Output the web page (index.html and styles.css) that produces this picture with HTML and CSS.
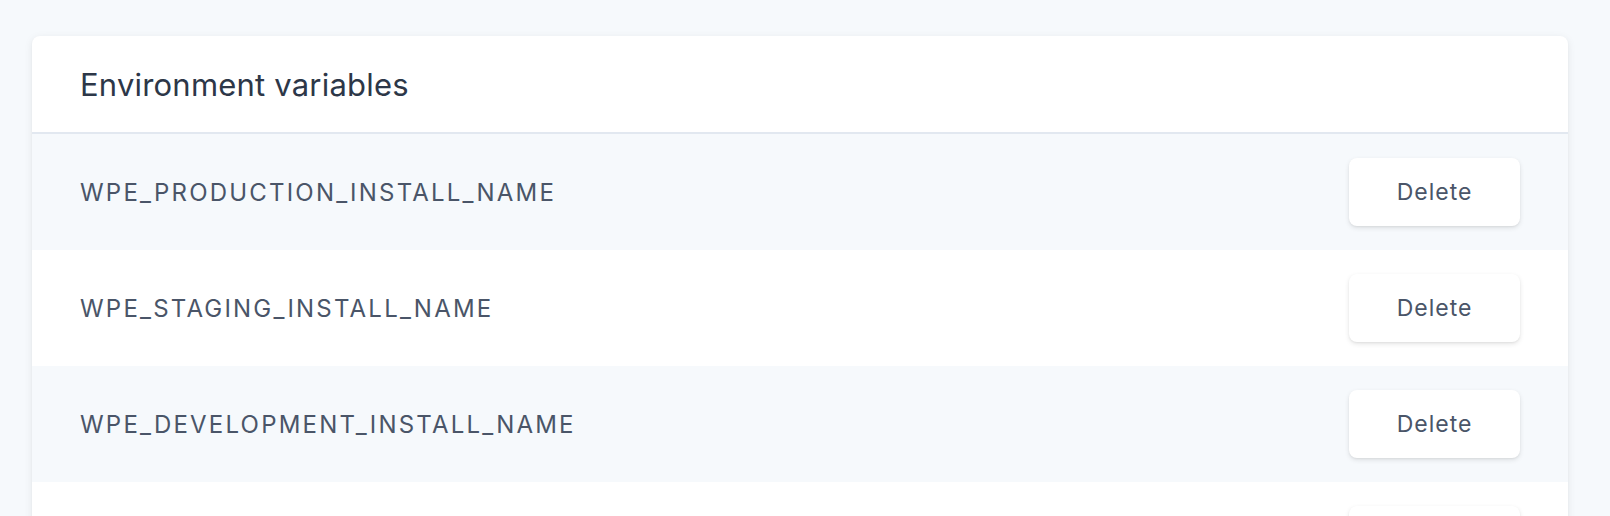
FILE: index.html
```html
<!DOCTYPE html>
<html lang="en">
<head>
    <meta charset="UTF-8">
    <meta name="viewport" content="width=device-width, initial-scale=1.0">
    <title>Environment variables</title>
    <link rel="stylesheet" href="styles.css">
</head>
<body>

<div class="card">
    <div class="card-header">
        <h2>Environment variables</h2>
    </div>
    <div class="env-row">
        <span class="env-name">WPE_PRODUCTION_INSTALL_NAME</span>
        <button class="btn">Delete</button>
    </div>
    <div class="env-row">
        <span class="env-name">WPE_STAGING_INSTALL_NAME</span>
        <button class="btn">Delete</button>
    </div>
    <div class="env-row">
        <span class="env-name">WPE_DEVELOPMENT_INSTALL_NAME</span>
        <button class="btn">Delete</button>
    </div>
    <div class="env-row">
        <span class="env-name"></span>
        <button class="btn"></button>
    </div>
</div>

</body>
</html>
```

FILE: styles.css
```css
body {
    font-family: Inter, "Noto Sans", sans-serif;
    margin: 0;
    padding: 36px 42px 0 32px;
    background-color: #f6f9fc;
    overflow: hidden;
}
.card {
    background: #fff;
    border-radius: 8px;
    box-shadow: 0 2px 8px rgba(0, 0, 0, 0.08), 0 1px 2px rgba(0, 0, 0, 0.04);
    overflow: hidden;
}
.card-header {
    height: 96px;
    padding: 0 48px;
    display: flex;
    align-items: center;
    border-bottom: 2px solid #e2e8f0;
}
.card-header h2 {
    margin: 0;
    font-size: 31px;
    font-weight: 400;
    letter-spacing: 0.2px;
    color: #2d3748;
}
.env-row {
    height: 116px;
    padding: 0 48px;
    display: flex;
    align-items: center;
    justify-content: space-between;
    box-sizing: border-box;
}
.env-row:nth-child(even) {
    background: #f6f9fc;
}
.env-name {
    font-size: 24px;
    letter-spacing: 2.2px;
    color: #4a5568;
}
.btn {
    width: 171px;
    height: 68px;
    background: #fff;
    border: none;
    border-radius: 8px;
    box-shadow: 0 2px 5px rgba(0, 0, 0, 0.1), 0 1px 2px rgba(0, 0, 0, 0.05);
    font-family: inherit;
    font-size: 23px;
    letter-spacing: 1px;
    color: #4a5568;
    cursor: pointer;
}
```
